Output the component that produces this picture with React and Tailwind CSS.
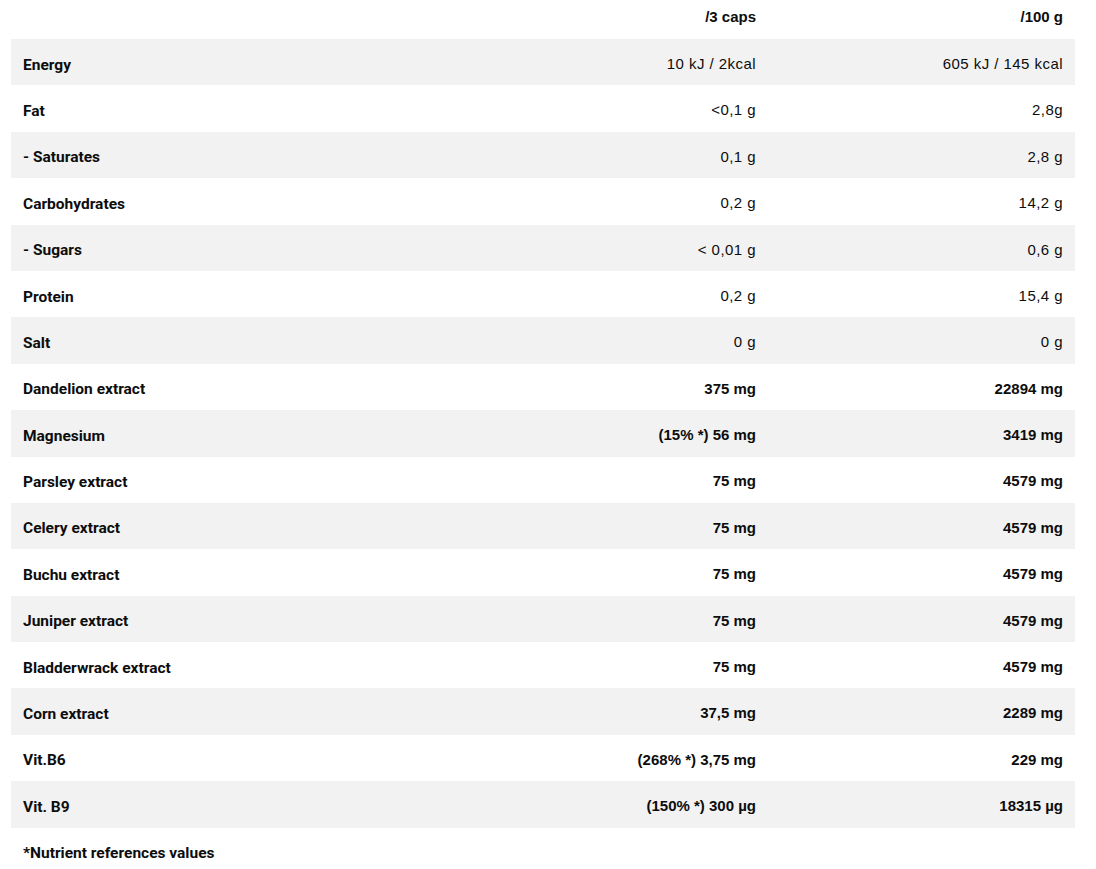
import React from 'react';

const rows = [
    ['Energy', '10 kJ / 2kcal', '605 kJ / 145 kcal', false],
    ['Fat', '<0,1 g', '2,8g', false],
    ['- Saturates', '0,1 g', '2,8 g', false],
    ['Carbohydrates', '0,2 g', '14,2 g', false],
    ['- Sugars', '< 0,01 g', '0,6 g', false],
    ['Protein', '0,2 g', '15,4 g', false],
    ['Salt', '0 g', '0 g', false],
    ['Dandelion extract', '375 mg', '22894 mg', true],
    ['Magnesium', '(15% *) 56 mg', '3419 mg', true],
    ['Parsley extract', '75 mg', '4579 mg', true],
    ['Celery extract', '75 mg', '4579 mg', true],
    ['Buchu extract', '75 mg', '4579 mg', true],
    ['Juniper extract', '75 mg', '4579 mg', true],
    ['Bladderwrack extract', '75 mg', '4579 mg', true],
    ['Corn extract', '37,5 mg', '2289 mg', true],
    ['Vit.B6', '(268% *) 3,75 mg', '229 mg', true],
    ['Vit. B9', '(150% *) 300 µg', '18315 µg', true],
];

const labelFont = "font-['Roboto',sans-serif] font-bold text-[15.5px]";
const valueFont = "font-['Liberation_Sans',Arial,sans-serif] text-[15px]";

export default function App() {
    return (
        <div className="min-h-screen bg-white text-[#0d0d0d] px-[11px]">
            <div className="w-[1064px]">
                <div className="grid grid-cols-[450px_307px_307px] h-[39px] items-center pb-[4px]">
                    <div />
                    <div className={`${valueFont} font-bold text-right pr-[12px]`}>/3 caps</div>
                    <div className={`${valueFont} font-bold text-right pr-[12px]`}>/100 g</div>
                </div>
                {rows.map(([label, perServing, per100, bold], index) => (
                    <div
                        key={label}
                        className={`grid grid-cols-[450px_307px_307px] h-[46.4px] items-center pt-[4px] ${
                            index % 2 === 0 ? 'bg-[#f2f2f2]' : 'bg-white'
                        }`}
                    >
                        <div className={`${labelFont} pl-[12px] pt-[2px]`}>{label}</div>
                        <div className={`${valueFont} ${bold ? 'font-bold' : 'tracking-[0.45px]'} text-right pr-[12px]`}>{perServing}</div>
                        <div className={`${valueFont} ${bold ? 'font-bold' : 'tracking-[0.45px]'} text-right pr-[12px]`}>{per100}</div>
                    </div>
                ))}
                <div className={`${labelFont} pl-[12px] pt-[14px]`}>*Nutrient references values</div>
            </div>
        </div>
    );
}
